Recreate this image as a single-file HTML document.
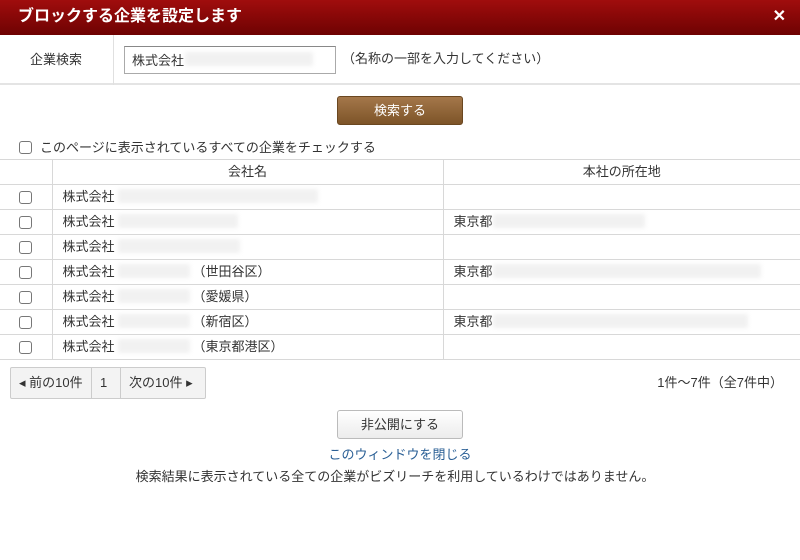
<!DOCTYPE html>
<html><head><meta charset="utf-8"><style>
*{box-sizing:border-box;margin:0;padding:0}
body{width:800px;height:560px;background:#fff;font-family:"Liberation Sans","Noto Sans CJK JP",sans-serif;font-size:13px;line-height:16px;color:#333;position:relative;overflow:hidden}
.a{position:absolute}
.hd{left:0;top:0;width:800px;height:35px;background:linear-gradient(#a00d0d,#6e0202);color:#fff;font-weight:bold;font-size:16px;line-height:33px;padding-left:18px}
.x{right:14px;top:0;color:#fff;font-size:16px;line-height:33px;font-weight:bold}
.blur{background:#f1f1f1;filter:blur(2px);height:14px}
.cb{width:13px;height:13px;border:1px solid #777;border-radius:3px;background:#fff}
.btn{border-radius:3px;text-align:center;line-height:27px}
table{border-collapse:collapse;position:absolute;left:0;top:159px;width:800px}
td{border:1px solid #d8d8d8;height:25px;padding:0 10px;font-size:13px;white-space:nowrap;line-height:16px;vertical-align:middle}
tr td:first-child{border-left:none;width:52px;padding:0}
tr td:last-child{border-right:none}
.pg{top:367px;left:10px;height:32px;border:1px solid #ccc;background:#f3f3f3;display:flex;border-radius:2px}
.pg div{line-height:30px;border-right:1px solid #ccc;padding:0 8px}
</style></head><body>
<div class="a hd">ブロックする企業を設定します</div>
<div class="a x">✕</div>
<div class="a" style="left:0;top:35px;width:800px;height:50px;border-bottom:2px solid #e4e4e4"></div>
<div class="a" style="left:113px;top:35px;width:1px;height:50px;background:#e0e0e0"></div>
<div class="a" style="left:30px;top:52px">企業検索</div>
<div class="a" style="left:124px;top:46px;width:212px;height:28px;border:1px solid #aaa;border-top-color:#888;padding:6px 7px">株式会社</div>
<div class="a blur" style="left:185px;top:52px;width:128px"></div>
<div class="a" style="left:342px;top:51px">（名称の一部を入力してください）</div>
<div class="a btn" style="left:337px;top:96px;width:126px;height:29px;background:linear-gradient(#a4774a,#7d5428);color:#fff;border:1px solid #6a4720">検索する</div>
<div class="a cb" style="left:19px;top:141px"></div>
<div class="a" style="left:40px;top:140px">このページに表示されているすべての企業をチェックする</div>
<table>
<tr><td></td><td style="text-align:center;width:391px">会社名</td><td style="text-align:center">本社の所在地</td></tr>
<tr><td><div class="cb" style="margin-left:19px"></div></td><td>株式会社</td><td></td></tr>
<tr><td><div class="cb" style="margin-left:19px"></div></td><td>株式会社</td><td>東京都</td></tr>
<tr><td><div class="cb" style="margin-left:19px"></div></td><td>株式会社</td><td></td></tr>
<tr><td><div class="cb" style="margin-left:19px"></div></td><td>株式会社<span style="margin-left:78px">（世田谷区）</span></td><td>東京都</td></tr>
<tr><td><div class="cb" style="margin-left:19px"></div></td><td>株式会社<span style="margin-left:78px">（愛媛県）</span></td><td></td></tr>
<tr><td><div class="cb" style="margin-left:19px"></div></td><td>株式会社<span style="margin-left:78px">（新宿区）</span></td><td>東京都</td></tr>
<tr><td><div class="cb" style="margin-left:19px"></div></td><td>株式会社<span style="margin-left:78px">（東京都港区）</span></td><td></td></tr>
</table>
<div class="a blur" style="left:118px;top:189px;width:200px"></div>
<div class="a blur" style="left:118px;top:214px;width:120px"></div>
<div class="a blur" style="left:118px;top:239px;width:122px"></div>
<div class="a blur" style="left:118px;top:264px;width:72px"></div>
<div class="a blur" style="left:118px;top:289px;width:72px"></div>
<div class="a blur" style="left:118px;top:314px;width:72px"></div>
<div class="a blur" style="left:118px;top:339px;width:72px"></div>
<div class="a blur" style="left:493px;top:214px;width:152px"></div>
<div class="a blur" style="left:493px;top:264px;width:268px"></div>
<div class="a blur" style="left:493px;top:314px;width:255px"></div>
<div class="a pg"><div style="width:81px">◂ 前の10件</div><div style="width:29px">1</div><div style="width:84px;border-right:none">次の10件 ▸</div></div>
<div class="a" style="right:17px;top:375px">1件〜7件（全7件中）</div>
<div class="a btn" style="left:337px;top:410px;width:126px;height:29px;background:linear-gradient(#fff,#ececec);border:1px solid #bbb">非公開にする</div>
<div class="a" style="left:0;width:800px;top:447px;text-align:center;color:#2a5f95">このウィンドウを閉じる</div>
<div class="a" style="left:0;width:790px;top:469px;text-align:center">検索結果に表示されている全ての企業がビズリーチを利用しているわけではありません。</div>
</body></html>
